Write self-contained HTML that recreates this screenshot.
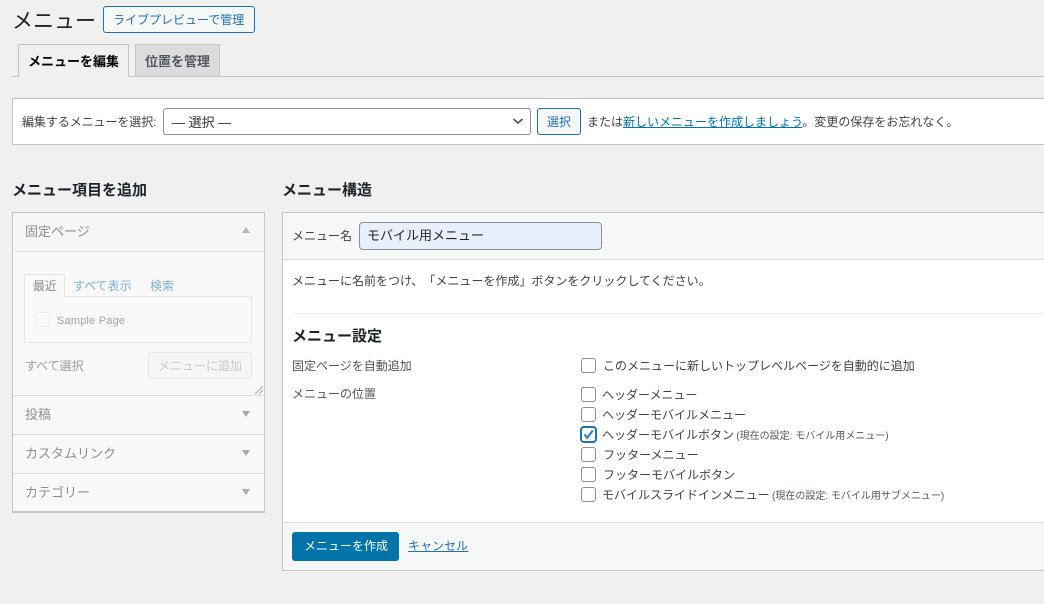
<!DOCTYPE html>
<html lang="ja"><head><meta charset="utf-8"><title>メニュー</title>
<style>
html,body{margin:0;padding:0}
body{width:1044px;height:604px;overflow:hidden;position:relative;background:#f0f0f1;font:12px/16px "Liberation Sans","Noto Sans CJK JP",sans-serif;color:#3c434a;text-spacing-trim:space-all}
.b,.t{position:absolute;box-sizing:border-box}
.t{white-space:nowrap;margin-top:1px}
a{color:#2271b1}
.h{font-size:15px;font-weight:700;color:#1d2327}
.cb{position:absolute;left:581px;width:15px;height:15px;box-sizing:border-box;border:1px solid #8c8f94;border-radius:3px;background:#fff}
.g{color:#8b8f94;font-size:13px}
.s{font-size:10px;color:#50575e}
</style></head><body>

<div class="t" style="left:12px;top:7px;font-size:21px;line-height:28px;color:#1d2327">メニュー</div>
<div class="b" style="left:103px;top:6px;width:152px;height:27px;border:1px solid #2271b1;border-radius:3px;background:#f6f7f7"></div>
<div class="t" style="left:113px;top:11px;color:#2271b1">ライブプレビューで管理</div>

<div class="b" style="top:76px;width:1032px;height:1px;left:12px;background:#c3c4c7"></div>
<div class="b" style="left:18px;top:44px;width:111px;height:33px;border:1px solid #c3c4c7;border-bottom:0;background:#f0f0f1"></div>
<div class="t" style="left:28px;top:53px;font-size:13px;font-weight:700;color:#000">メニューを編集</div>
<div class="b" style="left:135px;top:44px;width:85px;height:32px;border:1px solid #c3c4c7;border-bottom:0;background:#dcdcde"></div>
<div class="t" style="left:145px;top:53px;font-size:13px;font-weight:700;color:#50575e">位置を管理</div>

<div class="b" style="left:12px;top:98px;width:1040px;height:47px;border:1px solid #c3c4c7;background:#fff"></div>
<div class="t" style="left:22px;top:113px;letter-spacing:-.08px">編集するメニューを選択:</div>
<div class="b" style="left:163px;top:108px;width:368px;height:27px;border:1px solid #8c8f94;border-radius:3px;background:#fff"></div>
<div class="t" style="left:172px;top:114px;font-size:13px;color:#2c3338">— 選択 —</div>
<svg class="b" style="left:511px;top:116px" width="14" height="10" viewBox="0 0 14 10"><path d="M2.5 3L7 7L11.5 3" fill="none" stroke="#50575e" stroke-width="1.7"/></svg>
<div class="b" style="left:537px;top:108px;width:44px;height:27px;border:1px solid #2271b1;border-radius:3px;background:#f6f7f7"></div>
<div class="t" style="left:547px;top:113px;color:#2271b1">選択</div>
<div class="t" style="left:587px;top:113px">または<a href="#" style="color:#0073aa">新しいメニューを作成しましょう</a>。変更の保存をお忘れなく。</div>

<div class="t h" style="left:12px;top:181px;line-height:18px">メニュー項目を追加</div>
<div class="t h" style="left:282px;top:181px;line-height:18px">メニュー構造</div>

<!-- left accordion -->
<div class="b" style="left:12px;top:212px;width:253px;height:301px;border:1px solid #c3c4c7;border-bottom:2px solid #c6c7cb;background:#f9f9f9"></div>
<div class="b" style="left:13px;top:213px;width:251px;height:38px;background:#f5f6f6"></div>
<div class="b" style="left:13px;top:251px;width:251px;height:1px;background:#e4e5e7"></div>
<div class="b" style="left:13px;top:395px;width:251px;height:1px;background:#dcdcde"></div>
<div class="b" style="left:13px;top:434px;width:251px;height:1px;background:#dcdcde"></div>
<div class="b" style="left:13px;top:473px;width:251px;height:1px;background:#dcdcde"></div>
<div class="t g" style="left:25px;top:223px">固定ページ</div>
<div class="t g" style="left:25px;top:406px">投稿</div>
<div class="t g" style="left:25px;top:445px">カスタムリンク</div>
<div class="t g" style="left:25px;top:484px">カテゴリー</div>
<svg class="b" style="left:241px;top:226px" width="10" height="8"><path d="M1 7L5 1L9 7Z" fill="#b4b6b9"/></svg>
<svg class="b" style="left:241px;top:410px" width="10" height="8"><path d="M1 1L5 7L9 1Z" fill="#a7aaad"/></svg>
<svg class="b" style="left:241px;top:449px" width="10" height="8"><path d="M1 1L5 7L9 1Z" fill="#a7aaad"/></svg>
<svg class="b" style="left:241px;top:488px" width="10" height="8"><path d="M1 1L5 7L9 1Z" fill="#a7aaad"/></svg>

<div class="b" style="left:24px;top:296px;width:228px;height:47px;border:1px solid #e4e5e7"></div>
<div class="b" style="left:24px;top:274px;width:41px;height:23px;border:1px solid #e4e5e7;border-bottom:0;background:#f9f9f9"></div>
<div class="t" style="left:33px;top:277px;color:#8b8f94">最近</div>
<div class="t" style="left:73px;top:277px;color:#7fb0d6">すべて表示</div>
<div class="t" style="left:150px;top:277px;color:#7fb0d6">検索</div>
<div class="b" style="left:36px;top:312px;width:14px;height:15px;border:1px solid #ececee;border-radius:3px;background:#fafafa"></div>
<div class="t" style="left:57px;top:312px;font-size:11px;letter-spacing:.2px;color:#a2a4a7">Sample Page</div>
<div class="t" style="left:25px;top:357px;color:#9a9da0">すべて選択</div>
<div class="b" style="left:148px;top:352px;width:104px;height:27px;border:1px solid #e6e7e9;border-radius:3px;background:#f5f6f6"></div>
<div class="t" style="left:158px;top:357px;color:#c6c8ca">メニューに追加</div>
<svg class="b" style="left:254px;top:385px" width="10" height="10"><path d="M1 9L9 1M5 9L9 5" stroke="#a7aaad" stroke-width="1" fill="none"/></svg>

<!-- right box -->
<div class="b" style="left:282px;top:212px;width:770px;height:359px;border:1px solid #c3c4c7;background:#fff"></div>
<div class="b" style="left:283px;top:213px;width:761px;height:46px;background:#f6f7f7"></div>
<div class="b" style="left:283px;top:259px;width:761px;height:1px;background:#dcdcde"></div>
<div class="t" style="left:292px;top:227px">メニュー名</div>
<div class="b" style="left:359px;top:222px;width:243px;height:28px;border:1px solid #8c8f94;border-radius:4px;background:#e8f0fe"></div>
<div class="t" style="left:367px;top:227px;font-size:13px;color:#1d2327">モバイル用メニュー</div>
<div class="t" style="left:292px;top:272px">メニューに名前をつけ、「メニューを作成」ボタンをクリックしてください。</div>
<div class="b" style="left:292px;top:313px;width:752px;height:1px;background:#f0f0f1"></div>
<div class="t h" style="left:292px;top:327px;line-height:18px">メニュー設定</div>
<div class="t" style="left:292px;top:357px;color:#50575e">固定ページを自動追加</div>
<div class="t" style="left:292px;top:385px;color:#50575e">メニューの位置</div>

<div class="cb" style="top:358px"></div>
<div class="t" style="left:603px;top:357px">このメニューに新しいトップレベルページを自動的に追加</div>
<div class="cb" style="top:387px"></div>
<div class="t" style="left:602px;top:386px">ヘッダーメニュー</div>
<div class="cb" style="top:407px"></div>
<div class="t" style="left:602px;top:406px">ヘッダーモバイルメニュー</div>
<div class="cb" style="top:427px;border-color:#2271b1;box-shadow:0 0 0 1px #2271b1"></div>
<svg class="b" style="left:581px;top:427px" width="15" height="15" viewBox="0 0 15 15"><path d="M3.5 7.5L6.3 10.8L11.8 3.5" fill="none" stroke="#3582c4" stroke-width="2.2"/></svg>
<div class="t" style="left:602px;top:426px">ヘッダーモバイルボタン <span class="s" style="margin-left:-1px">(現在の設定: モバイル用メニュー)</span></div>
<div class="cb" style="top:447px"></div>
<div class="t" style="left:603px;top:446px">フッターメニュー</div>
<div class="cb" style="top:467px"></div>
<div class="t" style="left:603px;top:466px">フッターモバイルボタン</div>
<div class="cb" style="top:487px"></div>
<div class="t" style="left:602px;top:486px">モバイルスライドインメニュー <span class="s" style="margin-left:-1px">(現在の設定: モバイル用サブメニュー)</span></div>

<div class="b" style="left:283px;top:522px;width:761px;height:48px;background:#f6f7f7;border-top:1px solid #dcdcde"></div>
<div class="b" style="left:292px;top:532px;width:107px;height:29px;border-radius:3px;background:#0073a8"></div>
<div class="t" style="left:304px;top:537px;color:#fff">メニューを作成</div>
<div class="t" style="left:408px;top:537px"><a href="#">キャンセル</a></div>
</body></html>
